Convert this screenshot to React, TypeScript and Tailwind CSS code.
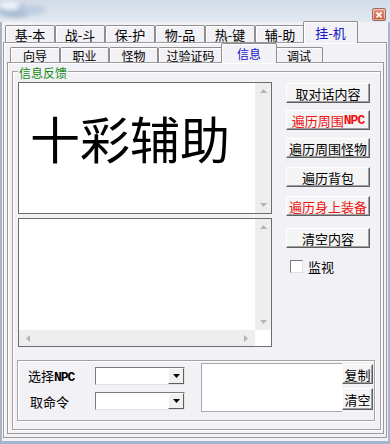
import React from 'react';

const WIN_BG = 'bg-[#f2f1f5]';

const mainTabs = [
  { label: '基-本', w: 'w-[50px]' },
  { label: '战-斗', w: 'w-[50px]' },
  { label: '保-护', w: 'w-[50px]' },
  { label: '物-品', w: 'w-[50px]' },
  { label: '热-键', w: 'w-[50px]' },
  { label: '辅-助', w: 'w-[50px]' },
  { label: '挂-机', w: 'w-[55px]', active: true },
];

const subTabs = [
  { label: '向导', w: 'w-[50px]' },
  { label: '职业', w: 'w-[49px]' },
  { label: '怪物', w: 'w-[49px]' },
  { label: '过验证码', w: 'w-[65px]' },
  { label: '信息', w: 'w-[56px]', active: true },
  { label: '调试', w: 'w-[48px]' },
];

function Tab({ label, w, active, small }: { label: string; w: string; active?: boolean; small?: boolean }) {
  if (active) {
    return (
      <div
        className={`relative z-10 -mx-[2px] -mb-px flex ${w} ${small ? 'h-[20px] text-[12px]' : 'h-[22px]'} items-center justify-center rounded-t-[2px] border border-b-0 border-[#8f8f8f] ${WIN_BG} pb-[1px] leading-[13px] text-[#1414c8] shadow-[inset_1px_1px_0_#fff]`}
      >
        {label}
      </div>
    );
  }
  return (
    <div
      className={`flex ${w} ${small ? 'h-[15px] text-[12px]' : 'h-[17px]'} items-center justify-center rounded-t-[2px] border border-b-0 border-[#8f8f8f] leading-[13px] text-black shadow-[inset_1px_1px_0_#fff]`}
    >
      {label}
    </div>
  );
}

function Arrow({ dir }: { dir: 'up' | 'down' | 'left' | 'right' }) {
  const d = {
    up: 'M0 4 L3.5 0 L7 4 Z',
    down: 'M0 0 L7 0 L3.5 4 Z',
    left: 'M4 0 L4 7 L0 3.5 Z',
    right: 'M0 0 L4 3.5 L0 7 Z',
  }[dir];
  const horiz = dir === 'left' || dir === 'right';
  return (
    <svg width={horiz ? 4 : 7} height={horiz ? 7 : 4} viewBox={horiz ? '0 0 4 7' : '0 0 7 4'}>
      <path d={d} fill="#b4b4b4" />
    </svg>
  );
}

function VScroll() {
  return (
    <div className="flex w-[16px] flex-col items-center justify-between bg-[#eeeeee] py-[6px]">
      <Arrow dir="up" />
      <Arrow dir="down" />
    </div>
  );
}

function Btn({ children, red, className = '' }: { children: React.ReactNode; red?: boolean; className?: string }) {
  return (
    <div
      className={`flex items-center justify-center border border-t-white border-l-white border-r-[#5f5f5f] border-b-[#5f5f5f] bg-[#f4f4f4] shadow-[inset_-1px_-1px_0_#a0a0a0] ${red ? 'text-[#ee1111]' : 'text-black'} ${className}`}
    >
      {children}
    </div>
  );
}

function Combo() {
  return (
    <div className="flex h-[18px] w-[90px] border border-t-[#7a7a7a] border-l-[#7a7a7a] border-r-[#e4e4e4] border-b-[#e4e4e4] bg-white">
      <div className="flex-1" />
      <div className="flex w-[16px] items-center justify-center border border-t-white border-l-white border-r-[#5f5f5f] border-b-[#5f5f5f] bg-[#f0f0f0]">
        <svg width="7" height="4" viewBox="0 0 7 4">
          <path d="M0 0 L7 0 L3.5 4 Z" fill="#000" />
        </svg>
      </div>
    </div>
  );
}

export default function App() {
  return (
    <div
      className={`h-[444px] w-[390px] overflow-hidden ${WIN_BG} font-['Noto_Sans_CJK_SC','Noto_Sans',sans-serif] text-[13px] leading-[15px] shadow-[inset_-2px_-3px_0_#a3b6cf,inset_2px_0_0_#a9b3c2]`}
    >
      {/* title bar */}
      <div className="flex h-[22px] items-start justify-between bg-gradient-to-b from-[#d2dbe7] to-[#e3e9f1]">
        <svg width="70" height="22" viewBox="0 0 70 22">
          <defs>
            <filter id="blur">
              <feGaussianBlur stdDeviation="2" />
            </filter>
          </defs>
          <g filter="url(#blur)">
            <ellipse cx="16" cy="11" rx="18" ry="7" fill="#a9bdd4" />
            <ellipse cx="34" cy="10" rx="12" ry="5" fill="#bfcfe1" />
            <ellipse cx="10" cy="6" rx="10" ry="4" fill="#eef3f8" />
          </g>
        </svg>
        <div className="mr-[4px] mt-[8px] flex h-[13px] w-[14px] items-center justify-center rounded-[2px] border border-[#a06a5c] bg-gradient-to-b from-[#e99a86] to-[#c8553a] shadow-[inset_0_0_0_1px_rgba(255,255,255,0.45)]">
          <svg width="6" height="6" viewBox="0 0 6 6">
            <path d="M0.5 0.5 L5.5 5.5 M5.5 0.5 L0.5 5.5" stroke="#fff" strokeWidth="1.7" />
          </svg>
        </div>
      </div>

      {/* main tabs */}
      <div className="flex h-[20px] items-end pl-[5px]">
        {mainTabs.map((t) => (
          <Tab key={t.label} {...t} />
        ))}
      </div>

      <div className="ml-[3px] h-[396px] w-[384px] border border-[#9b9b9b] shadow-[inset_1px_1px_0_#fff]">
        {/* sub tabs */}
        <div className="flex h-[19px] items-end pl-[6px]">
          {subTabs.map((t) => (
            <Tab key={t.label} {...t} small />
          ))}
        </div>

        <div className="ml-[3px] h-[372px] w-[377px] border border-[#9b9b9b] shadow-[inset_1px_1px_0_#fff]">
          {/* 信息反馈 group */}
          <div className="relative ml-[4px] mt-[8px] h-[359px] w-[369px] border border-[#a3a3a3] pl-[4px] pt-[10px] shadow-[1px_1px_0_#fff,inset_1px_1px_0_#fff]">
            <span className={`absolute -top-[6px] left-[5px] px-[1px] ${WIN_BG} text-[12px] leading-[13px] text-[#178c17]`}>信息反馈</span>

            <div className="flex">
              <div className="ml-[1px] flex w-[254px] flex-col gap-[4px]">
                <div className="flex h-[132px] border border-[#6c6c6c] bg-white">
                  <div className="flex-1 pl-[11px] pt-[29px] text-[50px] leading-none text-black">十彩辅助</div>
                  <VScroll />
                </div>
                <div className="flex h-[129px] flex-col border border-[#6c6c6c] bg-white">
                  <div className="flex flex-1">
                    <div className="flex-1" />
                    <VScroll />
                  </div>
                  <div className="flex h-[16px]">
                    <div className="flex flex-1 items-center justify-between bg-[#eeeeee] px-[7px]">
                      <Arrow dir="left" />
                      <Arrow dir="right" />
                    </div>
                    <div className="w-[16px] bg-white" />
                  </div>
                </div>
              </div>

              <div className="ml-[14px] flex w-[84px] flex-col">
                <Btn className="mt-[1px] h-[20px]">取对话内容</Btn>
                <Btn red className="mt-[7px] h-[20px]">
                  遍历周围<span className="font-['Liberation_Mono',monospace] font-bold tracking-[-1px]">NPC</span>
                </Btn>
                <Btn className="mt-[8px] h-[20px]">遍历周围怪物</Btn>
                <Btn className="mt-[9px] h-[20px]">遍历背包</Btn>
                <Btn red className="mt-[9px] h-[20px]">遍历身上装备</Btn>
                <Btn className="mt-[12px] h-[20px]">清空内容</Btn>
                <div className="ml-[4px] mt-[11px] flex items-center">
                  <div className="h-[13px] w-[13px] border border-t-[#7a7a7a] border-l-[#7a7a7a] border-r-[#e0e0e0] border-b-[#e0e0e0] bg-white" />
                  <span className="ml-[5px]">监视</span>
                </div>
              </div>
            </div>

            {/* bottom group */}
            <div className="mt-[13px] flex h-[61px] w-[358px] border border-[#a3a3a3] shadow-[1px_1px_0_#fff,inset_1px_1px_0_#fff]">
              <div className="flex flex-col gap-[7px] pl-[10px] pt-[6px]">
                <div className="flex h-[18px] items-center">
                  <span className="w-[67px]">
                    选择<span className="font-['Liberation_Mono',monospace] font-bold tracking-[-1px]">NPC</span>
                  </span>
                  <Combo />
                </div>
                <div className="flex h-[18px] items-center">
                  <span className="w-[67px] pl-[2px]">取命令</span>
                  <Combo />
                </div>
              </div>
              <div className="ml-[16px] mt-[2px] h-[49px] w-[141px] border border-r-0 border-[#a8a8a8] bg-white" />
              <div className="mt-[3px] flex flex-col gap-[4px]">
                <Btn className="h-[20px] w-[31px]">复制</Btn>
                <Btn className="h-[22px] w-[31px]">清空</Btn>
              </div>
            </div>
          </div>
        </div>
      </div>
    </div>
  );
}
